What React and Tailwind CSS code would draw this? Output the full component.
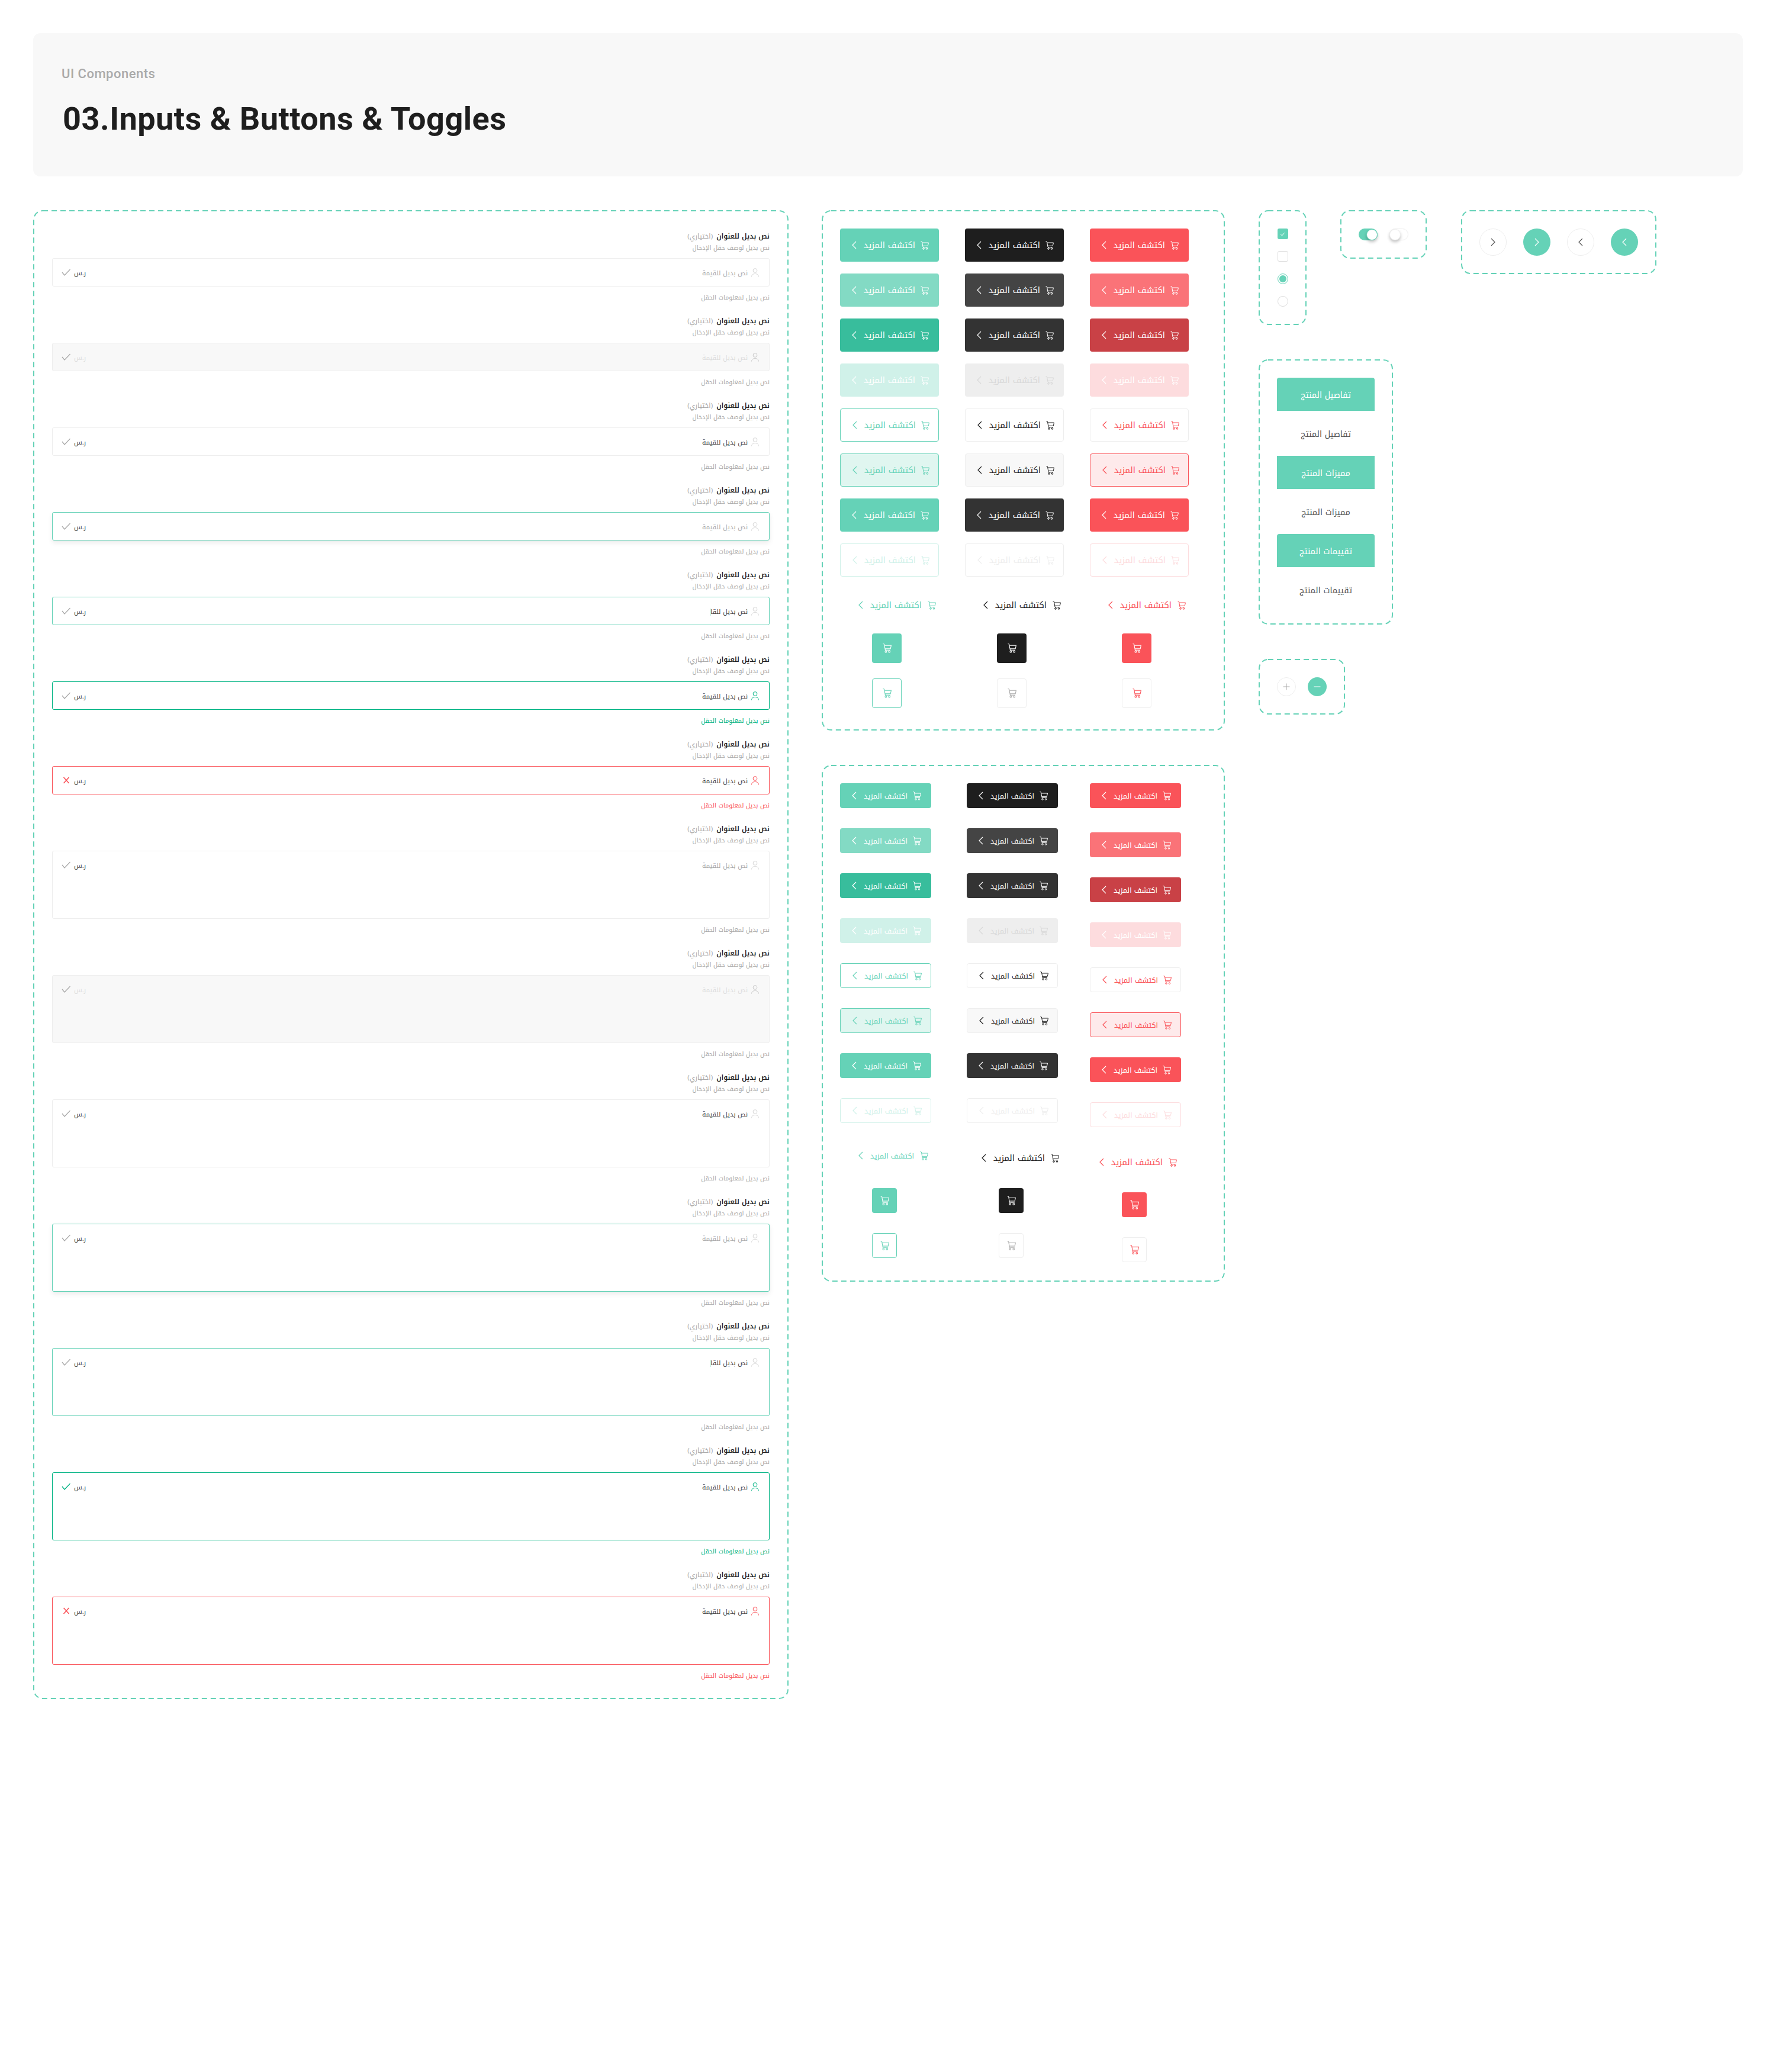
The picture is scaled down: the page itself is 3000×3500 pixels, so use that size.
import React from "react";

const Chevron = ({ dir = "left", className = "", w = 8, h = 14 }) => (
  <svg width={w} height={h} viewBox="0 0 8 14" fill="none" stroke="currentColor" strokeWidth="1.2" className={"shrink-0 " + className}>
    {dir === "left" ? <path d="M7 1 1 7l6 6" /> : <path d="M1 1l6 6-6 6" />}
  </svg>
);

const Cart = ({ className = "", w = 14, h = 15 }) => (
  <svg width={w} height={h} viewBox="0 0 14 15" fill="none" stroke="currentColor" strokeWidth="1" className={"shrink-0 " + className}>
    <path d="M.5.5 2.4 1l1.7 9.500H12" />
    <path d="M2.900 3H13.500l-1.200 5.300H3.800" />
    <circle cx="5" cy="13" r="1.300" />
    <circle cx="10.500" cy="13" r="1.300" />
  </svg>
);

const User = ({ className = "" }) => (
  <svg width="13" height="15" viewBox="0 0 13 15" fill="none" stroke="currentColor" strokeWidth="1" className={"shrink-0 " + className}>
    <circle cx="6.500" cy="4" r="3.400" />
    <path d="M.5 14.500c0-3.200 2.600-5 6-5s6 1.800 6 5" />
  </svg>
);

const Check = ({ className = "" }) => (
  <svg width="16" height="12" viewBox="0 0 16 12" fill="none" stroke="currentColor" strokeWidth="1.300" className={"shrink-0 " + className}>
    <path d="M1 6l4 5 9.500-10" />
  </svg>
);

const Cross = ({ className = "" }) => (
  <svg width="12" height="12" viewBox="0 0 12 12" fill="none" stroke="currentColor" strokeWidth="1.600" className={"shrink-0 " + className}>
    <path d="M1.500 1l9 10M10.500 1l-9 10" />
  </svg>
);

const Panel = ({ className = "", children }) => (
  <div className={"relative border-2 border-transparent rounded-[16px] bg-white " + className}>
    <svg className="absolute -top-[2px] -left-[2px] w-[calc(100%+4px)] h-[calc(100%+4px)] pointer-events-none overflow-visible" fill="none">
      <rect x="1" y="1" rx="15" ry="15" className="w-[calc(100%-2px)] h-[calc(100%-2px)]" stroke="#65d2b7" strokeWidth="2" strokeDasharray="9 6" />
    </svg>
    {children}
  </div>
);

const fieldStates = [
  { box: "border-[#eeeeee]", val: "text-[#aaaaaa]", sar: "text-[#444444]", user: "text-[#d5d5d5]", check: "text-[#aaaaaa]", info: "text-[#aaaaaa]", value: "نص بديل للقيمة" },
  { box: "border-[#eeeeee] bg-[#f8f8f8]", val: "text-[#dddddd]", sar: "text-[#dddddd]", user: "text-[#c8c8c8]", check: "text-[#aaaaaa]", info: "text-[#aaaaaa]", value: "نص بديل للقيمة" },
  { box: "border-[#eeeeee]", val: "text-[#444444]", sar: "text-[#444444]", user: "text-[#d5d5d5]", check: "text-[#aaaaaa]", info: "text-[#aaaaaa]", value: "نص بديل للقيمة" },
  { box: "border-[#65d2b7] shadow-[0_4px_8px_rgba(0,0,0,0.08)]", val: "text-[#aaaaaa]", sar: "text-[#444444]", user: "text-[#d5d5d5]", check: "text-[#aaaaaa]", info: "text-[#aaaaaa]", value: "نص بديل للقيمة" },
  { box: "border-[#65d2b7]", val: "text-[#444444]", sar: "text-[#444444]", user: "text-[#d5d5d5]", check: "text-[#aaaaaa]", info: "text-[#aaaaaa]", value: "نص بديل للقا", caret: true },
  { box: "border-[#00b383]", val: "text-[#444444]", sar: "text-[#444444]", user: "text-[#00b383]", check: "text-[#aaaaaa]", info: "text-[#00b383]", value: "نص بديل للقيمة", area: "text-[#00b383]" },
  { box: "border-[#fa5359]", val: "text-[#444444]", sar: "text-[#444444]", user: "text-[#fa5359]", info: "text-[#fa5359]", value: "نص بديل للقيمة", error: true },
];

const Field = ({ s, area }) => (
  <div className="flex flex-col items-stretch mb-[19px]">
    <div dir="rtl" className="h-[20px] flex items-center gap-[6px] text-[11.500px] leading-[20px] whitespace-nowrap">
      <span className="font-semibold text-[#1e1e1e]">نص بديل للعنوان</span>
      <span className="text-[#aaaaaa]">(اختياري)</span>
    </div>
    <div dir="rtl" className="h-[20px] text-[10.500px] leading-[20px] text-[#aaaaaa] whitespace-nowrap">نص بديل لوصف حقل الإدخال</div>
    <div className={"mt-[7px] border rounded-[3px] " + s.box + " " + (area ? "h-[115px]" : "h-[48px]")}>
      <div className="h-[46px] flex items-center justify-between pl-[15px] pr-[17px]">
        <div className="flex items-center gap-[5px]">
          <span className="w-[16px] flex justify-center">
            {s.error ? <Cross className="text-[#fa5359]" /> : <Check className={area && s.area ? s.area : s.check} />}
          </span>
          <span className={"text-[11px] leading-[20px] mt-[3px] " + s.sar}>ر.س</span>
        </div>
        <div className="flex items-center gap-[6px]">
          <span dir="rtl" className={"text-[11px] leading-[20px] mt-[3px] whitespace-nowrap " + s.val}>
            {s.value}
            {s.caret && <span className="inline-block w-px h-[12px] bg-[#65d2b7] align-middle" />}
          </span>
          <User className={s.user} />
        </div>
      </div>
    </div>
    <div dir="rtl" className={"mt-[9px] h-[20px] text-[10.500px] leading-[20px] whitespace-nowrap " + s.info}>نص بديل لمعلومات الحقل</div>
  </div>
);

const btnStyles = {
  teal: [
    "bg-[#65d2b7] text-white",
    "bg-[#83dac4] text-white",
    "bg-[#38bd9c] text-white",
    "bg-[#d0f1e9] text-white",
    "bg-white border-[1.500px] border-[#65d2b7] text-[#65d2b7]",
    "bg-[#e0f6f0] border-[1.500px] border-[#65d2b7] text-[#65d2b7]",
    "bg-[#65d2b7] text-white",
    "bg-white border-[1.500px] border-[#d0f1e9] text-[#d0f1e9]",
  ],
  black: [
    "bg-[#1e1e1e] text-white",
    "bg-[#444444] text-white",
    "bg-[#333333] text-white",
    "bg-[#eeeeee] text-[#d8d8d8]",
    "bg-white border-[1.500px] border-[#eeeeee] text-[#1e1e1e]",
    "bg-[#f8f8f8] border-[1.500px] border-[#eeeeee] text-[#1e1e1e]",
    "bg-[#333333] text-white",
    "bg-white border-[1.500px] border-[#eeeeee] text-[#eeeeee]",
  ],
  red: [
    "bg-[#fa5359] text-white",
    "bg-[#fa7378] text-white",
    "bg-[#c94146] text-white",
    "bg-[#fddcde] text-white",
    "bg-white border-[1.500px] border-[#eeeeee] text-[#fa5359]",
    "bg-[#feeaeb] border-[1.500px] border-[#fa5359] text-[#fa5359]",
    "bg-[#fa5359] text-white",
    "bg-white border-[1.500px] border-[#fddcde] text-[#fddcde]",
  ],
};

const Btn = ({ cls, big }) => (
  <div className={"flex items-center rounded-[4px] pl-[20px] " + cls + " " + (big ? "w-[167px] h-[56px]" : "w-[154px] h-[42px]")}>
    <Chevron />
    <span dir="rtl" className={"ml-[13px] mt-[3px] whitespace-nowrap leading-none " + (big ? "w-[86px] text-[14.400px]" : "w-[73px] text-[12.200px]")}>اكتشف المزيد</span>
    <Cart className="ml-[9px]" />
  </div>
);

const TextRow = ({ color, big, pl = "pl-[31px]", h = "h-[56px]", w = "w-[167px]" }) => (
  <div className={"flex items-center " + pl + " " + h + " " + w + " " + color}>
    <Chevron />
    <span dir="rtl" className={"ml-[13px] mt-[3px] whitespace-nowrap leading-none " + (big ? "w-[86px] text-[14.400px]" : "w-[73px] text-[12.200px]")}>اكتشف المزيد</span>
    <Cart className="ml-[10px]" />
  </div>
);

const Square = ({ cls, size, ml }) => (
  <div className={"flex items-center justify-center rounded-[4px] " + size + " " + ml + " " + cls}>
    <Cart w={15} h={16} />
  </div>
);

export default function App() {
  return (
    <div className="w-[3000px] min-h-[3500px] bg-white pt-[56px] px-[56px] font-['Noto_Kufi_Arabic','Noto_Sans',sans-serif]">
      <div className="h-[242px] bg-[#f8f8f8] rounded-[12px] pl-[48px] pt-[56px] mb-[57px]">
        <div className="text-[22px] leading-[26px] font-medium text-[#aaaaaa] font-['Roboto',sans-serif] tracking-[0.500px]">UI Components</div>
        <div className="mt-[32px] text-[54px] leading-[62px] font-bold text-[#1e1e1e] font-['Roboto',sans-serif] pl-[2px] tracking-[0.500px]">03.Inputs &amp; Buttons &amp; Toggles</div>
      </div>

      <div className="flex items-start">
        <Panel className="w-[1276px] shrink-0 pt-[32px] pb-[8px] px-[30px]">
          {fieldStates.map((s, i) => <Field key={i} s={s} />)}
          {fieldStates.map((s, i) => <Field key={"a" + i} s={s} area />)}
        </Panel>

        <div className="ml-[56px] flex flex-col w-[681px] shrink-0">
          <Panel className="pt-[29px] pb-[36px] pl-[29px] flex gap-[44px]">
            {["teal", "black", "red"].map((k) => {
              const text = k === "teal" ? "text-[#65d2b7]" : k === "black" ? "text-[#1e1e1e]" : "text-[#fa5359]";
              const solid = btnStyles[k][0];
              const out = "border-[1.500px] bg-white " + (k === "teal" ? "border-[#65d2b7] text-[#65d2b7]" : k === "black" ? "border-[#eeeeee] text-[#aaaaaa]" : "border-[#eeeeee] text-[#fa5359]");
              return (
                <div key={k} className="flex flex-col gap-[20px]">
                  {btnStyles[k].map((c, i) => <Btn key={i} cls={c} big />)}
                  <TextRow color={text} big />
                  <Square cls={solid} size="w-[50px] h-[50px] mb-[6px]" ml="ml-[54px]" />
                  <Square cls={out} size="w-[50px] h-[50px]" ml="ml-[54px]" />
                </div>
              );
            })}
          </Panel>

          <Panel className="mt-[58px] h-[873px] pt-[29px] pl-[29px] flex">
            <div className="flex flex-col gap-[34px]">
              {btnStyles.teal.map((c, i) => <Btn key={i} cls={c} />)}
              <TextRow color="text-[#65d2b7]" h="h-[42px]" w="w-[154px]" />
              <Square cls={btnStyles.teal[0]} size="w-[42px] h-[42px]" ml="ml-[54px]" />
              <Square cls="bg-white border-[1.500px] border-[#65d2b7] text-[#65d2b7]" size="w-[42px] h-[42px]" ml="ml-[54px]" />
            </div>
            <div className="ml-[60px] flex flex-col gap-[34px]">
              {btnStyles.black.map((c, i) => <Btn key={i} cls={c} />)}
              <TextRow color="text-[#1e1e1e]" big h="h-[42px]" w="w-[154px]" pl="pl-[25px] mt-[4px] -mb-[4px]" />
              <Square cls={btnStyles.black[0]} size="w-[42px] h-[42px]" ml="ml-[54px]" />
              <Square cls="bg-white border-[1.500px] border-[#eeeeee] text-[#aaaaaa]" size="w-[42px] h-[42px]" ml="ml-[54px]" />
            </div>
            <div className="ml-[54px] flex flex-col">
              {btnStyles.red.map((c, i) => (
                <div key={i} className={i === 0 ? "mb-[41px]" : "mb-[34px]"}><Btn cls={c} /></div>
              ))}
              <TextRow color="text-[#fa5359]" big h="h-[42px]" w="w-[154px]" pl="pl-[16px] mt-[4px] -mb-[4px]" />
              <Square cls={btnStyles.red[0] + " mt-[34px]"} size="w-[42px] h-[42px]" ml="ml-[54px]" />
              <Square cls="bg-white border-[1.500px] border-[#eeeeee] text-[#fa5359] mt-[34px]" size="w-[42px] h-[42px]" ml="ml-[54px]" />
            </div>
          </Panel>
        </div>

        <div className="ml-[57px] flex flex-col items-start">
          <div className="flex items-start">
            <Panel className="w-[81px] h-[194px] pt-[29px] flex flex-col items-center gap-[20px]">
              <div className="w-[18px] h-[18px] rounded-[3px] bg-[#65d2b7] flex items-center justify-center">
                <svg width="9" height="7" viewBox="0 0 9 7" fill="none" stroke="white" strokeWidth="1"><path d="M1 3.500 3.500 6 8 1" /></svg>
              </div>
              <div className="w-[18px] h-[18px] rounded-[3px] border-[1.500px] border-[#dddddd]" />
              <div className="w-[18px] h-[18px] rounded-full border border-[#65d2b7] flex items-center justify-center">
                <div className="w-[12px] h-[12px] rounded-full bg-[#65d2b7]" />
              </div>
              <div className="w-[18px] h-[18px] rounded-full border-[1.500px] border-[#dddddd]" />
            </Panel>

            <Panel className="ml-[57px] w-[146px] h-[82px] pt-[29px] pl-[29px] flex gap-[20px]">
              <div className="w-[32px] h-[20px] rounded-full bg-[#65d2b7] flex items-center justify-end">
                <div className="w-[19px] h-[19px] rounded-full bg-white border border-[#65d2b7] shadow-[0_3px_5px_rgba(0,0,0,0.25)]" />
              </div>
              <div className="w-[32px] h-[20px] rounded-full bg-white border border-[#eeeeee] flex items-center">
                <div className="w-[19px] h-[19px] -ml-px rounded-full bg-white border border-[#eeeeee] shadow-[0_3px_5px_rgba(0,0,0,0.25)]" />
              </div>
            </Panel>

            <Panel className="ml-[58px] w-[330px] h-[108px] pt-[29px] pl-[29px] flex gap-[28px]">
              <div className="w-[46px] h-[46px] rounded-full border border-[#eeeeee] flex items-center justify-center text-[#555555]"><Chevron dir="right" /></div>
              <div className="w-[46px] h-[46px] rounded-full bg-[#65d2b7] flex items-center justify-center text-white"><Chevron dir="right" /></div>
              <div className="w-[46px] h-[46px] rounded-full border border-[#eeeeee] flex items-center justify-center text-[#555555]"><Chevron /></div>
              <div className="w-[46px] h-[46px] rounded-full bg-[#65d2b7] flex items-center justify-center text-white"><Chevron /></div>
            </Panel>
          </div>

          <Panel className="mt-[58px] w-[227px] h-[448px] pt-[29px] pl-[29px] flex flex-col gap-[10px]">
            {[
              ["تفاصيل المنتج", "rounded-t-[4px]"],
              ["مميزات المنتج", ""],
              ["تقييمات المنتج", "rounded-t-[4px]"],
            ].map(([t, r], i) => (
              <React.Fragment key={i}>
                <div dir="rtl" className={"w-[165px] h-[56px] pt-[3px] bg-[#65d2b7] text-white text-[14px] flex items-center justify-center " + r}>{t}</div>
                <div dir="rtl" className="w-[165px] h-[56px] pt-[3px] text-[#555555] text-[14px] flex items-center justify-center">{t}</div>
              </React.Fragment>
            ))}
          </Panel>

          <Panel className="mt-[58px] w-[146px] h-[94px] pt-[29px] pl-[29px] flex gap-[20px]">
            <div className="w-[32px] h-[32px] rounded-full border border-[#eeeeee] flex items-center justify-center">
              <svg width="12" height="12" viewBox="0 0 12 12" stroke="#aaaaaa" strokeWidth="1"><path d="M6 .5v11M.5 6h11" /></svg>
            </div>
            <div className="w-[32px] h-[32px] rounded-full bg-[#65d2b7] flex items-center justify-center">
              <svg width="12" height="2" viewBox="0 0 12 2" stroke="white" strokeWidth="1"><path d="M.5 1h11" /></svg>
            </div>
          </Panel>
        </div>
      </div>
    </div>
  );
}
